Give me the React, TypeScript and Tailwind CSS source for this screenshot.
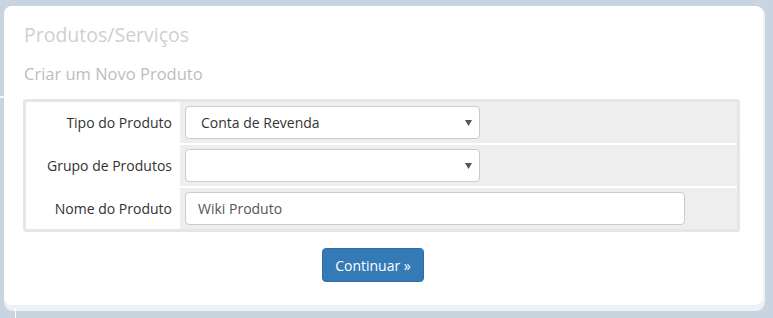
import React from 'react';

const font = { fontFamily: '"Open Sans", "Noto Sans", sans-serif' };

const Caret = () => (
  <svg width="7" height="6" viewBox="0 0 7 6" className="absolute right-[7px] top-[13px]">
    <path d="M0 0h7L3.5 6z" fill="#555" />
  </svg>
);

const rows = [
  { label: 'Tipo do Produto', kind: 'select', value: 'Conta de Revenda' },
  { label: 'Grupo de Produtos', kind: 'select', value: '' },
  { label: 'Nome do Produto', kind: 'input', value: 'Wiki Produto' },
];

export default function App() {
  return (
    <div className="relative w-[773px] h-[318px] bg-[#c9d4e1] overflow-hidden" style={font}>
      <div className="absolute left-0 top-[96px] w-[5px] h-[2px] bg-white/80" />
      <div className="absolute left-[15px] top-[308px] w-px h-[10px] bg-white/90" />

      <div className="ml-[4px] mt-[6px] w-[761px] h-[305px] rounded-[9px] bg-[#eef2f6] pr-[2px] pb-[6px]">
        <div className="h-full rounded-[8px] bg-white pt-[15px] px-[19px]">
          <h1 className="text-[19.5px] leading-[28px] text-[#cfcfcf] pl-[1px]">Produtos/Serviços</h1>
          <h2 className="mt-[14px] text-[16.5px] leading-[22px] text-[#bdbdbd] pl-[1px]">Criar um Novo Produto</h2>

          <div className="mt-[14px] w-[717px] border-[3px] border-[#e2e7ea] rounded-[3px]">
            <div className="flex flex-col gap-[2px]">
              {rows.map((r) => (
                <div key={r.label} className="flex h-[41px]">
                  <div className="w-[154px] flex items-center justify-end pr-[8px] text-[14px] text-[#333]">
                    {r.label}
                  </div>
                  <div className="flex-1 bg-[#eeeeee] flex items-center pl-[5px]">
                    {r.kind === 'select' ? (
                      <div className="relative w-[295px] h-[33px] bg-white border border-[#ccc] rounded-[4px] text-[14px] text-[#333] flex items-center pl-[15px]">
                        {r.value}
                        <Caret />
                      </div>
                    ) : (
                      <div className="w-[500px] h-[33px] bg-white border border-[#ccc] rounded-[4px] text-[14px] text-[#555] flex items-center pl-[12px]">
                        {r.value}
                      </div>
                    )}
                  </div>
                </div>
              ))}
            </div>
          </div>

          <div className="flex mt-[16px] pl-[299px]">
            <button className="w-[102px] h-[34px] bg-[#337ab7] border border-[#2e6da4] rounded-[4px] text-white text-[14px]">
              Continuar »
            </button>
          </div>
        </div>
      </div>
    </div>
  );
}
